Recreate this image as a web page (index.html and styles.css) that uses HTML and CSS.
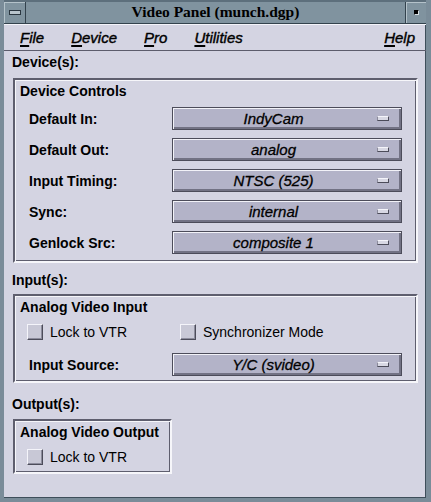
FILE: index.html
```html
<!DOCTYPE html>
<html lang="en">
<head>
    <meta charset="UTF-8">
    <title>Video Panel (munch.dgp)</title>
    <link rel="stylesheet" href="styles.css">
</head>
<body>
    <div class="window">
        <!-- window manager title bar -->
        <div class="titlebar">
            <div class="tb-menu"><span class="tb-menu-bar"></span></div>
            <div class="tb-title">Video Panel (munch.dgp)</div>
            <div class="tb-close"><span class="tb-close-dot"></span></div>
        </div>

        <div class="menubar">
            <span class="menu-item"><u>F</u>ile</span>
            <span class="menu-item"><u>D</u>evice</span>
            <span class="menu-item"><u>P</u>ro</span>
            <span class="menu-item"><u>U</u>tilities</span>
            <span class="menu-item help"><u>H</u>elp</span>
        </div>

        <div class="content">
            <div class="section-label">Device(s):</div>
            <div class="frame device-frame">
                <div class="frame-title">Device Controls</div>
                <div class="rows">
                    <div class="field-label">Default In:</div>
                    <div class="option"><span class="option-text">IndyCam</span><span class="indicator"></span></div>
                    <div class="field-label">Default Out:</div>
                    <div class="option"><span class="option-text">analog</span><span class="indicator"></span></div>
                    <div class="field-label">Input Timing:</div>
                    <div class="option"><span class="option-text">NTSC (525)</span><span class="indicator"></span></div>
                    <div class="field-label">Sync:</div>
                    <div class="option"><span class="option-text">internal</span><span class="indicator"></span></div>
                    <div class="field-label">Genlock Src:</div>
                    <div class="option"><span class="option-text">composite 1</span><span class="indicator"></span></div>
                </div>
            </div>

            <div class="section-label input-label">Input(s):</div>
            <div class="frame input-frame">
                <div class="frame-title">Analog Video Input</div>
                <div class="checks">
                    <label class="check"><span class="check-box"></span>Lock to VTR</label>
                    <label class="check"><span class="check-box"></span>Synchronizer Mode</label>
                </div>
                <div class="rows source-row">
                    <div class="field-label">Input Source:</div>
                    <div class="option"><span class="option-text">Y/C (svideo)</span><span class="indicator"></span></div>
                </div>
            </div>

            <div class="section-label output-label">Output(s):</div>
            <div class="frame output-frame">
                <div class="frame-title">Analog Video Output</div>
                <div class="checks">
                    <label class="check"><span class="check-box"></span>Lock to VTR</label>
                </div>
            </div>
        </div>
    </div>
</body>
</html>
```

FILE: styles.css
```css
body {
    margin: 0;
    font-family: "Liberation Sans", Arial, sans-serif;
    background: #d4d4e2;
    color: #000;
}
.window {
    width: 431px;
    height: 502px;
    box-sizing: border-box;
    background: #d4d4e2;
    border-left: 4px solid #7a8c99;
    border-right: 5px solid #7a8c99;
    border-bottom: 4px solid #7a8c99;
    box-shadow: inset -1px -1px 0 #3e4e5a;
}

/* title bar */
.titlebar {
    display: flex;
    height: 24px;
    box-sizing: border-box;
    background: #80939f;
    border-top: 2px solid #5d6f7c;
    border-bottom: 1px solid #33424d;
}
.tb-menu {
    width: 21px;
    display: flex;
    align-items: center;
    justify-content: center;
    border-right: 1px solid #33424d;
    box-shadow: inset 1px 1px 0 #b4c2ca;
}
.tb-menu-bar {
    width: 10px;
    height: 3px;
    background: #b8c4cc;
    border: 1px solid #2a3640;
}
.tb-title {
    flex: 1;
    text-align: center;
    font-family: "Liberation Serif", serif;
    font-weight: bold;
    font-size: 15.5px;
    line-height: 20px;
    color: #000;
}
.tb-close {
    width: 20px;
    display: flex;
    align-items: center;
    justify-content: center;
    border-left: 1px solid #33424d;
    box-shadow: inset 1px 1px 0 #b4c2ca;
}
.tb-close-dot {
    width: 3px;
    height: 3px;
    background: #000;
    border: 1px solid #d8e0e4;
    border-top-color: #000;
    border-left-color: #000;
}

/* menu bar */
.menubar {
    display: flex;
    gap: 27px;
    height: 27px;
    box-sizing: border-box;
    padding: 4px 11px 3px 16px;
    border-top: 1px solid #f4f4fa;
    border-bottom: 1px solid #5c5c6c;
    font-size: 15px;
    line-height: 18px;
    font-style: italic;
    -webkit-text-stroke: 0.4px #000;
}
.menu-item u {
    text-decoration-thickness: 2px;
    text-underline-offset: 2px;
}
.menu-item.help {
    margin-left: auto;
}

/* panel content */
.content {
    padding: 3px 8px 0 8px;
}
.section-label {
    font-size: 14px;
    font-weight: bold;
    line-height: 16px;
}
.input-label {
    margin-top: 9px;
}
.output-label {
    margin-top: 13px;
}
.frame {
    margin-left: 1px;
    border: 2px solid;
    border-color: #5e5e6e #f6f6fa #f6f6fa #5e5e6e;
    box-shadow: inset 1px 1px 0 #f6f6fa, inset -1px -1px 0 #5e5e6e;
    padding: 3px 0 7px 5px;
}
.device-frame {
    margin-top: 8px;
}
.input-frame {
    margin-top: 6px;
    padding-bottom: 5px;
}
.output-frame {
    margin-top: 7px;
    width: 159px;
    box-sizing: border-box;
}
.frame-title {
    font-size: 14px;
    font-weight: bold;
    line-height: 16px;
}
.rows {
    display: grid;
    grid-template-columns: 143px 230px;
    row-gap: 8px;
    margin: 8px 0 0 9px;
    align-items: center;
}
.source-row {
    margin-top: 13px;
}
.field-label {
    font-size: 14px;
    font-weight: bold;
    line-height: 16px;
}
.option {
    display: flex;
    align-items: center;
    height: 23px;
    box-sizing: border-box;
    padding: 0 12px 0 2px;
    background: #b3b3c8;
    border: 1px solid #4c4c5a;
    box-shadow: inset 1px 1px 0 #f2f2f8, inset -2px -2px 0 #727284;
}
.option-text {
    flex: 1;
    text-align: center;
    font-size: 15px;
    font-style: italic;
    line-height: 17px;
    -webkit-text-stroke: 0.3px #000;
}
.indicator {
    width: 10px;
    height: 3px;
    margin-left: 5px;
    background: #d8d8e4;
    border: 1px solid;
    border-color: #f4f4fa #4c4c5a #4c4c5a #8a8a9a;
}
.checks {
    display: grid;
    grid-template-columns: 153px auto;
    margin: 9px 0 0 7px;
}
.output-frame .checks {
    grid-template-columns: auto;
}
.check {
    display: flex;
    align-items: center;
    gap: 7px;
    height: 16px;
    font-size: 14px;
    line-height: 16px;
}
.check-box {
    width: 16px;
    height: 16px;
    box-sizing: border-box;
    background: #c8c8d6;
    border: 1px solid;
    border-color: #f4f4fa #4c4c5a #4c4c5a #f4f4fa;
    box-shadow: inset -1px -1px 0 #8c8c9c;
}
```
